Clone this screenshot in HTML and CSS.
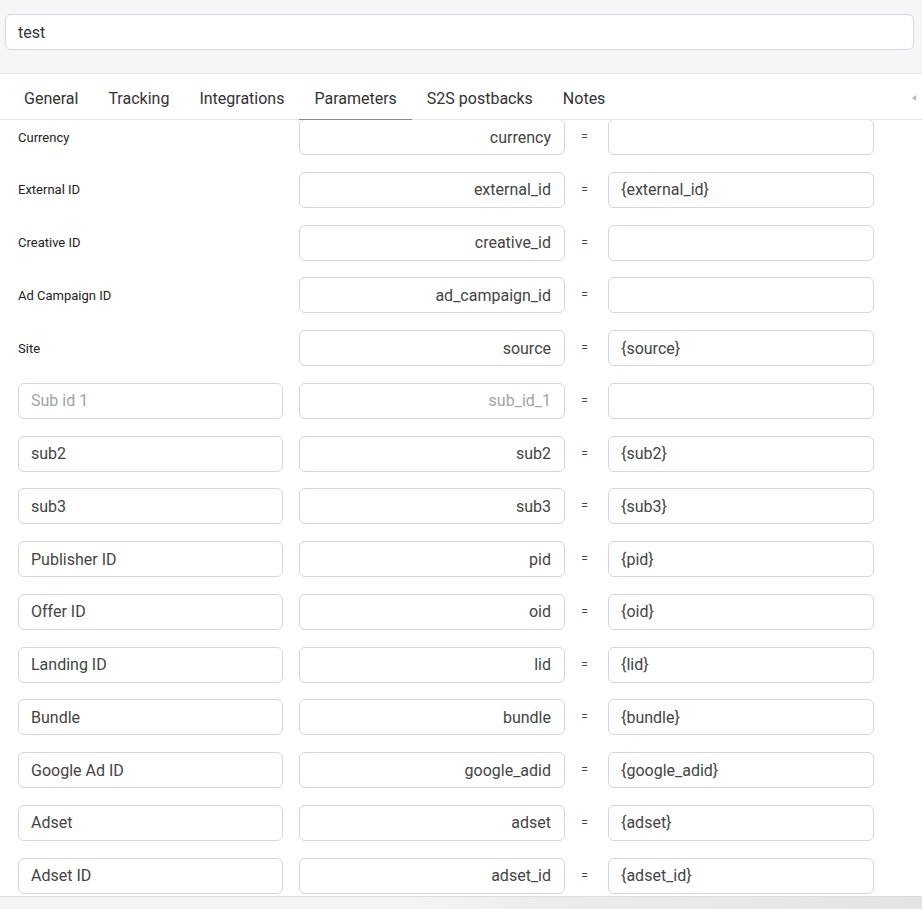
FILE: index.html
```html
<!DOCTYPE html>
<html>
<head>
<meta charset="utf-8">
<link rel="stylesheet" href="styles.css">
</head>
<body>
<div class="page">
  <div class="top">
    <div class="field name-field">test</div>
  </div>
  <div class="tabs">
    <span class="tab">General</span>
    <span class="tab">Tracking</span>
    <span class="tab">Integrations</span>
    <span class="tab active">Parameters</span>
    <span class="tab">S2S postbacks</span>
    <span class="tab">Notes</span>
    <span class="scroll-arrow"></span>
  </div>
  <div class="content">
    <div class="params">
      <div class="label">Currency</div><div class="field right">currency</div><div class="eq">=</div><div class="field"></div>
      <div class="label">External ID</div><div class="field right">external_id</div><div class="eq">=</div><div class="field">{external_id}</div>
      <div class="label">Creative ID</div><div class="field right">creative_id</div><div class="eq">=</div><div class="field"></div>
      <div class="label">Ad Campaign ID</div><div class="field right">ad_campaign_id</div><div class="eq">=</div><div class="field"></div>
      <div class="label">Site</div><div class="field right">source</div><div class="eq">=</div><div class="field">{source}</div>
      <div class="field placeholder">Sub id 1</div><div class="field right placeholder">sub_id_1</div><div class="eq">=</div><div class="field"></div>
      <div class="field">sub2</div><div class="field right">sub2</div><div class="eq">=</div><div class="field">{sub2}</div>
      <div class="field">sub3</div><div class="field right">sub3</div><div class="eq">=</div><div class="field">{sub3}</div>
      <div class="field">Publisher ID</div><div class="field right">pid</div><div class="eq">=</div><div class="field">{pid}</div>
      <div class="field">Offer ID</div><div class="field right">oid</div><div class="eq">=</div><div class="field">{oid}</div>
      <div class="field">Landing ID</div><div class="field right">lid</div><div class="eq">=</div><div class="field">{lid}</div>
      <div class="field">Bundle</div><div class="field right">bundle</div><div class="eq">=</div><div class="field">{bundle}</div>
      <div class="field">Google Ad ID</div><div class="field right">google_adid</div><div class="eq">=</div><div class="field">{google_adid}</div>
      <div class="field">Adset</div><div class="field right">adset</div><div class="eq">=</div><div class="field">{adset}</div>
      <div class="field">Adset ID</div><div class="field right">adset_id</div><div class="eq">=</div><div class="field">{adset_id}</div>
    </div>
  </div>
  <div class="footer"></div>
</div>
</body>
</html>
```

FILE: styles.css
```css
* { box-sizing: border-box; }
html, body { margin: 0; padding: 0; }
body {
  font-family: Roboto, "Liberation Sans", sans-serif;
  color: #333;
  background: #fff;
}
.page {
  height: 909px;
  display: flex;
  flex-direction: column;
  overflow: hidden;
}
.top {
  background: #f6f6f6;
  padding: 14px 8px 23px 5px;
  border-bottom: 1px solid #e6e6e6;
}
.field {
  height: 36px;
  border: 1px solid #d3d7dd;
  border-radius: 6px;
  background: #fff;
  padding: 0 12px;
  display: flex;
  align-items: center;
  font-size: 16px;
  color: #444;
  white-space: nowrap;
  overflow: hidden;
}
.name-field { color: #333; }
.tabs {
  position: relative;
  z-index: 1;
  height: 46px;
  display: flex;
  align-items: stretch;
  padding-left: 9px;
  border-bottom: 1px solid #e6e6e6;
  background: #fff;
}
.tab {
  padding: 0 15px;
  font-size: 16px;
  color: #333;
  display: flex;
  align-items: center;
  padding-top: 3px;
  border-bottom: 1px solid transparent;
  margin-bottom: -1px;
}
.tab.active { border-bottom-color: #8a8a8a; }
.scroll-arrow {
  margin-left: auto;
  align-self: center;
  margin-right: 6px;
  margin-top: 3px;
  width: 0;
  height: 0;
  border-top: 3px solid transparent;
  border-bottom: 3px solid transparent;
  border-right: 4px solid #bbb;
}
.content {
  flex: 1;
  overflow: hidden;
  margin-top: -1px;
}
.params {
  display: grid;
  grid-template-columns: 265px 266px 11px 266px;
  column-gap: 16px;
  row-gap: 16.75px;
  padding-left: 18px;
}
.label {
  font-size: 13px;
  color: #222;
  display: flex;
  align-items: center;
  height: 36px;
}
.right { justify-content: flex-end; padding-right: 13px; }
.placeholder { color: #a3a3a3; }
.eq {
  font-size: 12px;
  color: #444;
  display: flex;
  align-items: center;
  justify-content: center;
  margin-left: -4px;
}
.footer {
  height: 13px;
  border-top: 1px solid #dcdcdc;
  background: linear-gradient(90deg, #f4f4f4 0%, #f4f4f4 45%, #ececec 60%, #e4e4e4 100%);
}
```
